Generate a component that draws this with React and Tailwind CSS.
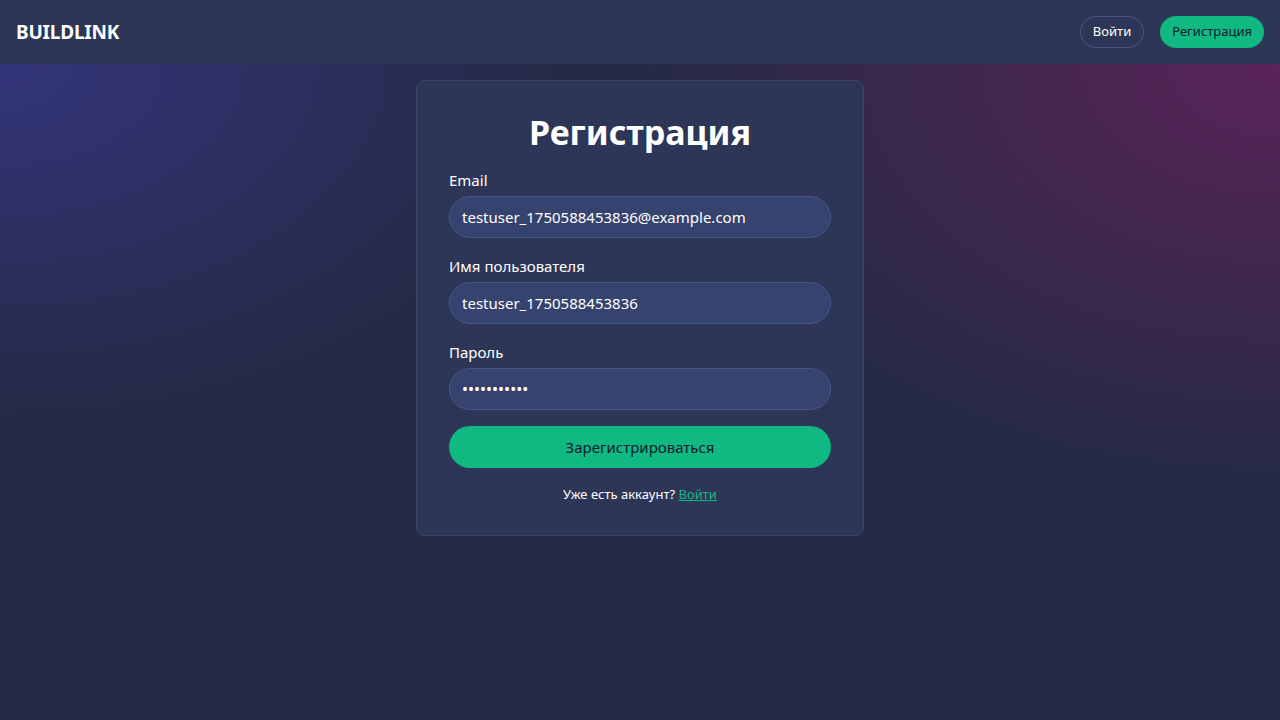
export default function App() {
  return (
    <div
      className="min-h-screen w-full text-white bg-[#242a45]"
      style={{ fontFamily: '"Noto Sans", "Open Sans", sans-serif' }}
    >
      <header className="h-16 flex items-center justify-between px-4 bg-[#2d3656]">
        <div className="text-[19px] font-bold tracking-[-0.2px]">BUILDLINK</div>
        <div className="flex items-center gap-4">
          <button className="h-8 px-3 rounded-full border border-[#4a5585] text-[13px] text-white">
            Войти
          </button>
          <button className="h-8 px-3 rounded-full bg-[#10b981] text-[13px] text-[#0d1b2a]">
            Регистрация
          </button>
        </div>
      </header>

      <main className="min-h-[656px] bg-[radial-gradient(ellipse_45%_55%_at_0%_0%,#33357a_0%,rgba(51,53,122,0)_100%),radial-gradient(ellipse_50%_65%_at_100%_0%,#5a2458_0%,rgba(90,36,88,0)_100%)] flex justify-center pt-4">
        <div className="w-[448px] h-fit rounded-lg border border-[#3a4468] bg-[#2d3657] px-8 pt-8 pb-[31px]">
          <h1 className="text-[34px] leading-[39px] font-bold text-center mb-4">Регистрация</h1>

          <form className="flex flex-col" onSubmit={(e) => e.preventDefault()}>
            <label className="block text-[15px] leading-6 mb-1">Email</label>
            <input
              className="h-[42px] w-full rounded-full bg-[#36436e] border border-[#46558a] px-3 text-[15px] text-white outline-none mb-4"
              defaultValue="testuser_1750588453836@example.com"
            />
            <label className="block text-[15px] leading-6 mb-1">Имя пользователя</label>
            <input
              className="h-[42px] w-full rounded-full bg-[#36436e] border border-[#46558a] px-3 text-[15px] text-white outline-none mb-4"
              defaultValue="testuser_1750588453836"
            />
            <label className="block text-[15px] leading-6 mb-1">Пароль</label>
            <input
              type="password"
              className="h-[42px] w-full rounded-full bg-[#36436e] border border-[#46558a] px-3 text-[16px] text-white outline-none mb-4"
              defaultValue="password123"
            />
            <button
              type="submit"
              className="h-[42px] w-full rounded-full bg-[#10b981] text-[15px] text-[#0d1b2a]"
            >
              Зарегистрироваться
            </button>
          </form>

          <p className="mt-4 text-[13px] leading-5 text-center">
            Уже есть аккаунт?{" "}
            <a href="#" className="text-[#10b981] underline">
              Войти
            </a>
          </p>
        </div>
      </main>
    </div>
  );
}
